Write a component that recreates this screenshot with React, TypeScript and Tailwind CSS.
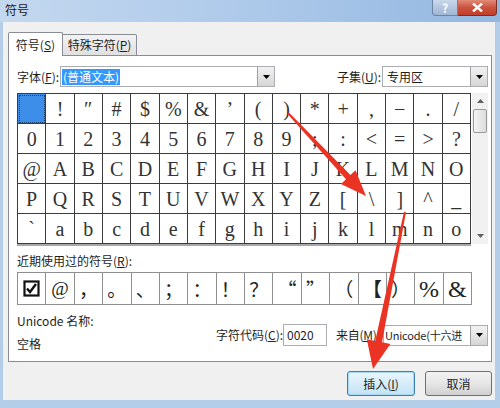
import React from "react";

const ui = { fontFamily: '"Noto Sans CJK SC", "Noto Sans", sans-serif' };
const serif = { fontFamily: '"Liberation Serif", "Noto Sans CJK SC", serif' };

const rows: string[][] = [
  [" ", "!", "″", "#", "$", "%", "&", "’", "(", ")", "*", "+", ",", "−", ".", "/"],
  ["0", "1", "2", "3", "4", "5", "6", "7", "8", "9", ";", ":", "<", "=", ">", "?"],
  ["@", "A", "B", "C", "D", "E", "F", "G", "H", "I", "J", "K", "L", "M", "N", "O"],
  ["P", "Q", "R", "S", "T", "U", "V", "W", "X", "Y", "Z", "[", "\\", "]", "^", "_"],
  ["`", "a", "b", "c", "d", "e", "f", "g", "h", "i", "j", "k", "l", "m", "n", "o"],
];

const recent = ["☑", "@", "，", "。", "、", "；", "：", "！", "？", "“", "”", "（", "【", "）", "%", "&"];

function Caret() {
  return (
    <svg width="7" height="4" viewBox="0 0 7 4">
      <path d="M0 0h7L3.5 4z" fill="#000" />
    </svg>
  );
}

function DropButton() {
  return (
    <div className="flex h-full w-[17px] shrink-0 items-center justify-center border-l border-[#a0a0a0] bg-gradient-to-b from-[#f2f2f2] to-[#d6d6d6]">
      <Caret />
    </div>
  );
}

function Key({ label, k }: { label: string; k: string }) {
  return (
    <span className="whitespace-nowrap">
      {label}(<span className="underline">{k}</span>):
    </span>
  );
}

export default function App() {
  return (
    <div className="relative flex h-[408px] w-[500px] flex-col overflow-hidden bg-[#b4cde9] text-[12px] text-[#1e1e1e]" style={ui}>
      {/* title bar */}
      <div className="flex h-[22px] shrink-0 items-start bg-gradient-to-r from-[#c4d8ef] via-[#adc9ea] to-[#93b7e0]">
        <span className="pl-[5px] pt-[3px] leading-[14px] text-[#1a1a1a]">符号</span>
        <div className="ml-auto mr-[3px] flex h-[16px]">
          <div className="flex w-[26px] items-center justify-center rounded-bl-[4px] border border-t-0 border-[#6d83a3] bg-gradient-to-b from-[#c9d8ea] to-[#9fb6d3] text-[12px] font-bold leading-none text-white">
            ?
          </div>
          <div className="flex w-[39px] items-center justify-center rounded-br-[4px] border border-l-0 border-t-0 border-[#7a2f25] bg-gradient-to-b from-[#e28a78] via-[#c9533e] to-[#c23d28]">
            <svg width="11" height="9" viewBox="0 0 11 9">
              <path d="M1 0.5l9 8M10 0.5l-9 8" stroke="#fff" strokeWidth="2.4" />
            </svg>
          </div>
        </div>
      </div>

      {/* body */}
      <div className="mb-[8px] ml-[3px] mr-[5px] flex flex-1 flex-col bg-[#f0f0f0] pl-[5px] pr-[3px] pt-[10px]">
        {/* tabs */}
        <div className="relative z-10 flex h-[24px] items-start">
          <div className="flex h-[24px] w-[55px] items-center justify-center rounded-t-[2px] border border-b-0 border-[#898c95] bg-white">
            <span>
              符号(<span className="underline">S</span>)
            </span>
          </div>
          <div className="mt-[2px] flex h-[22px] w-[74px] items-center justify-center rounded-tr-[2px] border border-l-0 border-[#898c95] bg-gradient-to-b from-[#f3f3f3] to-[#e0e0e0]">
            <span>
              特殊字符(<span className="underline">P</span>)
            </span>
          </div>
        </div>

        {/* panel */}
        <div className="-mt-px flex h-[307px] flex-col border border-[#898c95] bg-white pl-[8px]">
          {/* font row */}
          <div className="mt-[10px] flex h-[21px] items-center">
            <span className="w-[43px]">
              <Key label="字体" k="F" />
            </span>
            <div className="flex h-[21px] w-[215px] items-center border border-[#abadb3] bg-white">
              <div className="flex flex-1 items-center pl-[1px]">
                <span className="bg-[#3399ff] px-[1px] leading-[16px] text-white">(普通文本)</span>
              </div>
              <DropButton />
            </div>
            <span className="ml-[62px] w-[45px]">
              <Key label="子集" k="U" />
            </span>
            <div className="flex h-[21px] w-[106px] items-center border border-[#abadb3] bg-white">
              <span className="flex-1 pl-[4px]">专用区</span>
              <DropButton />
            </div>
          </div>

          {/* character grid */}
          <div className="mt-[6px] flex">
            <div className="grid w-[454px] grid-cols-16 border-l border-t border-[#3c3c3c] shadow-[0_2px_0_#a8a8a8]" style={serif}>
              {rows.flat().map((c, i) => (
                <div
                  key={i}
                  className={
                    i === 0
                      ? "flex h-[30px] items-center justify-center border-b border-r border-[#3c3c3c] bg-[#3c8ee8] outline outline-1 -outline-offset-2 outline-dotted outline-[#1a3d6b]"
                      : "flex h-[30px] items-center justify-center border-b border-r border-[#3c3c3c] text-[20px] leading-none text-[#333]"
                  }
                >
                  {c}
                </div>
              ))}
            </div>
            <div className="ml-[1px] flex h-[151px] w-[16px] flex-col items-center bg-[#f1f1f1]">
              <div className="flex h-[16px] items-center justify-center">
                <svg width="7" height="4" viewBox="0 0 7 4">
                  <path d="M0 4h7L3.5 0z" fill="#606060" />
                </svg>
              </div>
              <div className="h-[24px] w-[14px] rounded-[2px] border border-[#9a9a9a] bg-gradient-to-r from-[#f4f4f4] to-[#dcdcdc]" />
              <div className="mt-auto flex h-[16px] items-center justify-center">
                <svg width="7" height="4" viewBox="0 0 7 4">
                  <path d="M0 0h7L3.5 4z" fill="#606060" />
                </svg>
              </div>
            </div>
          </div>

          {/* recent */}
          <div className="mt-[10px] h-[14px] leading-[14px]">
            <span>
              近期使用过的符号(<span className="underline">R</span>):
            </span>
          </div>
          <div className="mt-[4px] grid h-[33px] w-[455px] grid-cols-16 border-l border-t border-[#8f8f8f]">
            {recent.map((c, i) => (
              <div
                key={i}
                className="flex items-center justify-center border-b border-r border-[#8f8f8f] text-[19px] leading-none text-[#222]"
                style={i === 1 || i >= 14 ? serif : ui}
              >
                {i === 0 ? (
                  <svg width="17" height="17" viewBox="0 0 17 17">
                    <rect x="1.5" y="1.5" width="14" height="14" fill="none" stroke="#111" strokeWidth="2.2" />
                    <path d="M4 8.5l3 3.5 6-8" fill="none" stroke="#111" strokeWidth="2.4" />
                  </svg>
                ) : i === 14 || i === 15 ? (
                  <span className="text-[24px]">{c}</span>
                ) : i === 12 ? (
                  <span className="font-bold">{c}</span>
                ) : (
                  c
                )}
              </div>
            ))}
          </div>

          {/* name / code */}
          <div className="mt-[9px] flex items-start">
            <div className="flex w-[199px] shrink-0 flex-col">
              <span className="leading-[14px]">Unicode 名称:</span>
              <span className="mt-[9px] leading-[14px]">空格</span>
            </div>
            <div className="mt-[10px] flex h-[22px] items-center">
              <span className="w-[67px] shrink-0">
                <Key label="字符代码" k="C" />
              </span>
              <div className="flex h-[22px] w-[44px] shrink-0 items-center border border-[#abadb3] bg-white pl-[3px]">0020</div>
              <span className="ml-[9px] w-[47px] shrink-0 tracking-[-0.3px]">
                <Key label="来自" k="M" />
              </span>
              <div className="flex h-[21px] w-[105px] shrink-0 items-center border border-[#abadb3] bg-white">
                <span className="flex-1 whitespace-nowrap pl-[1px] text-[11px] tracking-[-0.2px]">Unicode(十六进</span>
                <DropButton />
              </div>
            </div>
          </div>
        </div>

        {/* buttons */}
        <div className="mt-[9px] flex justify-end gap-[10px]">
          <div className="flex h-[25px] w-[68px] items-center justify-center rounded-[3px] border border-[#3c7fb1] bg-gradient-to-b from-[#eaf6fd] to-[#c4e3f6] shadow-[inset_0_0_0_1px_#a7d9f5]">
            <span>
              插入(<span className="underline">I</span>)
            </span>
          </div>
          <div className="flex h-[25px] w-[67px] items-center justify-center rounded-[3px] border border-[#707070] bg-gradient-to-b from-[#f2f2f2] via-[#e6e6e6] to-[#d0d0d0]">
            取消
          </div>
        </div>
      </div>

      {/* red arrows */}
      <svg className="pointer-events-none absolute left-0 top-0" width="500" height="408" viewBox="0 0 500 408">
        <polygon
          points="288.7,112.3 350.4,175 355.5,170.3 366,196 340.9,183.9 346,179.2 287.3,113.7"
          fill="#ea3323"
        />
        <polygon
          points="404,211.8 375.2,340.9 366.8,339.2 373,369 390.4,344 382,342.3 406,212.2"
          fill="#ea3323"
        />
      </svg>
    </div>
  );
}
